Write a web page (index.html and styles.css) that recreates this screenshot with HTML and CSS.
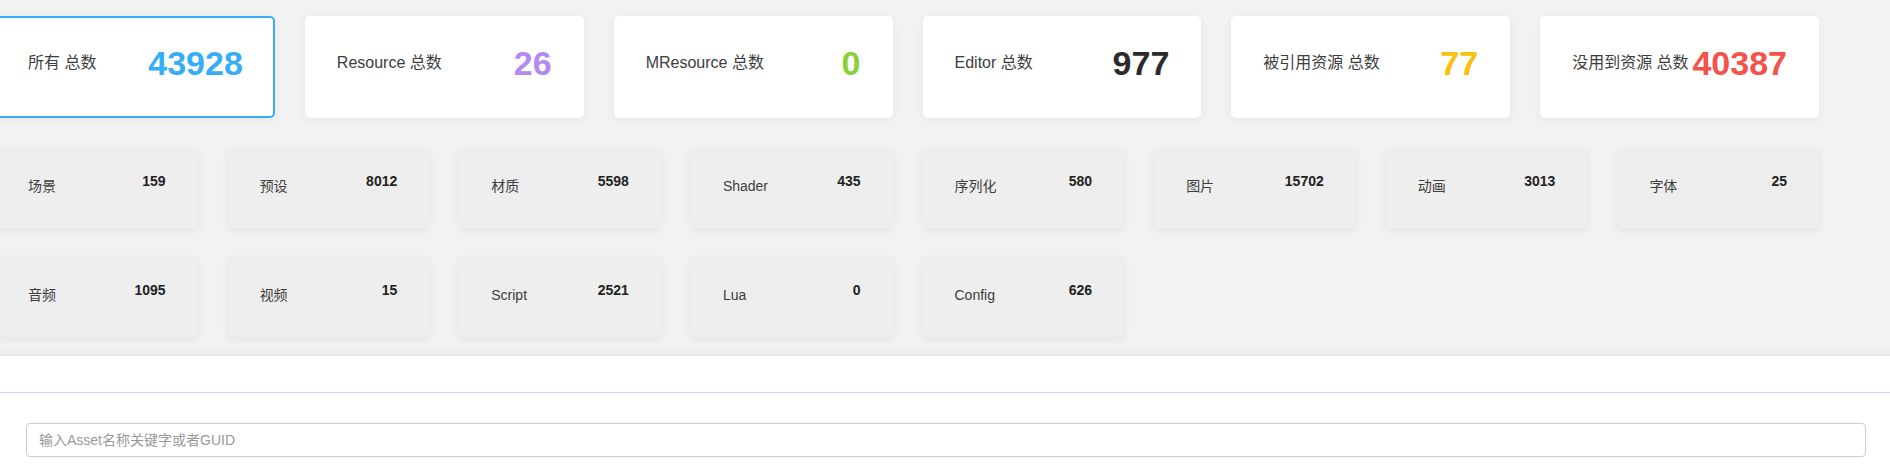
FILE: index.html
```html
<!DOCTYPE html>
<html lang="zh-CN">
<head>
<meta charset="utf-8">
<title>Asset 统计</title>
<link rel="stylesheet" href="styles.css">
</head>
<body>
<section class="overview">
  <div class="stats">
    <div class="total-grid">
      <div class="total-card active"><span class="total-label">所有 总数</span><span class="total-num c-blue">43928</span></div>
      <div class="total-card"><span class="total-label">Resource 总数</span><span class="total-num c-purple">26</span></div>
      <div class="total-card"><span class="total-label">MResource 总数</span><span class="total-num c-green">0</span></div>
      <div class="total-card"><span class="total-label">Editor 总数</span><span class="total-num c-dark">977</span></div>
      <div class="total-card"><span class="total-label">被引用资源 总数</span><span class="total-num c-yellow">77</span></div>
      <div class="total-card"><span class="total-label">没用到资源 总数</span><span class="total-num c-red">40387</span></div>
    </div>
    <div class="type-grid">
      <div class="type-card"><span class="type-label">场景</span><span class="type-num">159</span></div>
      <div class="type-card"><span class="type-label">预设</span><span class="type-num">8012</span></div>
      <div class="type-card"><span class="type-label">材质</span><span class="type-num">5598</span></div>
      <div class="type-card"><span class="type-label">Shader</span><span class="type-num">435</span></div>
      <div class="type-card"><span class="type-label">序列化</span><span class="type-num">580</span></div>
      <div class="type-card"><span class="type-label">图片</span><span class="type-num">15702</span></div>
      <div class="type-card"><span class="type-label">动画</span><span class="type-num">3013</span></div>
      <div class="type-card"><span class="type-label">字体</span><span class="type-num">25</span></div>
      <div class="type-card"><span class="type-label">音频</span><span class="type-num">1095</span></div>
      <div class="type-card"><span class="type-label">视频</span><span class="type-num">15</span></div>
      <div class="type-card"><span class="type-label">Script</span><span class="type-num">2521</span></div>
      <div class="type-card"><span class="type-label">Lua</span><span class="type-num">0</span></div>
      <div class="type-card"><span class="type-label">Config</span><span class="type-num">626</span></div>
    </div>
  </div>
</section>
<section class="search">
  <div class="tabbar"></div>
  <input class="search-input" type="text" placeholder="输入Asset名称关键字或者GUID">
</section>
</body>
</html>
```

FILE: styles.css
```css
* { box-sizing: border-box; }

html, body {
  margin: 0;
  padding: 0;
  background: #ffffff;
  font-family: "Liberation Sans", Arial, "Noto Sans CJK SC", sans-serif;
  color: #333;
  overflow: hidden;
}

.overview {
  background: #f2f2f2;
  padding: 16px 0 19px;
  box-shadow: inset 0 -10px 10px -8px rgba(0, 0, 0, 0.06);
}

.stats {
  margin-left: -4px;
  width: 1823px;
}

.total-grid {
  display: grid;
  grid-template-columns: repeat(6, 1fr);
  column-gap: 30px;
  margin-bottom: 31px;
}

.total-card {
  height: 102px;
  background: #fff;
  border: 2px solid #fff;
  border-radius: 5px;
  box-shadow: 0 2px 10px rgba(0, 0, 0, 0.05);
  padding: 25px 30px 0;
  display: flex;
  justify-content: space-between;
  align-items: flex-start;
}

.total-card > span { line-height: 40px; height: 40px; }

.total-card.active { border-color: #38adf7; }

.total-label {
  font-size: 16px;
  color: #3d3d3d;
  white-space: nowrap;
}

.total-num {
  font-size: 34px;
  font-weight: 700;
  white-space: nowrap;
}

.c-blue { color: #38adf7; }
.c-purple { color: #b48af1; }
.c-green { color: #88d13a; }
.c-dark { color: #2b2b2b; }
.c-yellow { color: #fbc00b; }
.c-red { color: #f4524b; }

.type-grid {
  display: grid;
  grid-template-columns: repeat(8, 1fr);
  column-gap: 30px;
  row-gap: 30px;
}

.type-card {
  height: 79px;
  background: #eeeeee;
  border-radius: 5px;
  box-shadow: 0 2px 8px rgba(0, 0, 0, 0.07);
  padding: 22px 32px 0 32px;
  display: flex;
  justify-content: space-between;
  align-items: flex-start;
}

.type-label {
  font-size: 14px;
  line-height: 20px;
  margin-top: 5px;
  color: #3d3d3d;
}

.type-num {
  font-size: 14px;
  line-height: 20px;
  font-weight: 700;
  color: #222;
}

.search {
  padding-top: 36px;
  height: 115px;
}

.tabbar {
  border-bottom: 1px solid #c9d7e6;
  margin-bottom: 30px;
}

.search-input {
  display: block;
  margin-left: 26px;
  width: 1840px;
  height: 34px;
  border: 1px solid #cccccc;
  border-radius: 4px;
  padding: 0 12px;
  font-size: 14px;
  font-family: "Liberation Sans", Arial, "Noto Sans CJK SC", sans-serif;
  color: #555;
  background: #fff;
  outline: none;
}

.search-input::placeholder { color: #999; }
```
